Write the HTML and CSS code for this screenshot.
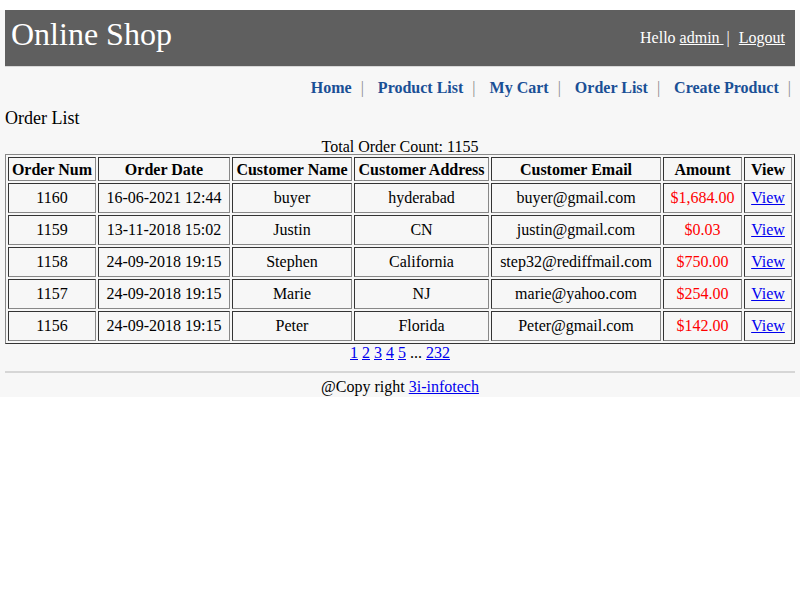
FILE: index.html
```html
<!DOCTYPE html>
<html>
<head>
<meta charset="utf-8">
<title>Online Shop</title>
<link rel="stylesheet" href="styles.css">
</head>
<body>
<div class="page">
  <div class="header">
    <div class="brand">Online Shop</div>
    <div class="user">Hello <a href="#">admin </a> <span class="bar">|</span> <a href="#">Logout</a></div>
  </div>
  <div class="nav">
    <a href="#">Home</a><span class="sep">|</span>
    <a href="#">Product List</a><span class="sep">|</span>
    <a href="#">My Cart</a><span class="sep">|</span>
    <a href="#">Order List</a><span class="sep">|</span>
    <a href="#">Create Product</a><span class="sep">|</span>
  </div>
  <div class="title">Order List</div>
  <div class="count">Total Order Count: 1155</div>
  <table class="orders" border="1">
    <tr><th class="c1">Order Num</th><th class="c2">Order Date</th><th class="c3">Customer Name</th><th class="c4">Customer Address</th><th class="c5">Customer Email</th><th class="c6">Amount</th><th class="c7">View</th></tr>
    <tr><td>1160</td><td>16-06-2021 12:44</td><td>buyer</td><td>hyderabad</td><td>buyer@gmail.com</td><td class="amt">$1,684.00</td><td><a href="#">View</a></td></tr>
    <tr><td>1159</td><td>13-11-2018 15:02</td><td>Justin</td><td>CN</td><td>justin@gmail.com</td><td class="amt">$0.03</td><td><a href="#">View</a></td></tr>
    <tr><td>1158</td><td>24-09-2018 19:15</td><td>Stephen</td><td>California</td><td>step32@rediffmail.com</td><td class="amt">$750.00</td><td><a href="#">View</a></td></tr>
    <tr><td>1157</td><td>24-09-2018 19:15</td><td>Marie</td><td>NJ</td><td>marie@yahoo.com</td><td class="amt">$254.00</td><td><a href="#">View</a></td></tr>
    <tr><td>1156</td><td>24-09-2018 19:15</td><td>Peter</td><td>Florida</td><td>Peter@gmail.com</td><td class="amt">$142.00</td><td><a href="#">View</a></td></tr>
  </table>
  <div class="pager"><a href="#">1</a> <a href="#">2</a> <a href="#">3</a> <a href="#">4</a> <a href="#">5</a> ... <a href="#">232</a></div>
  <hr class="rule">
  <div class="footer">@Copy right <a href="#">3i-infotech</a></div>
</div>
</body>
</html>
```

FILE: styles.css
```css
html, body {
  margin: 0;
  padding: 0;
  background: #fff;
  font-family: "Liberation Serif", "Times New Roman", serif;
  font-size: 16px;
  color: #000;
}
.page {
  margin-top: 10px;
  background: #f7f7f7;
  padding: 0 5px;
  width: 790px;
}
.header {
  background: #5f5f5f;
  height: 56px;
  border-bottom: 1px solid #d8d8d8;
  display: flex;
  justify-content: space-between;
  align-items: center;
  color: #fff;
}
.brand {
  font-size: 32px;
  padding-left: 6px;
  margin-top: -8px;
}
.user {
  padding-right: 10px;
  font-size: 16px;
}
.user a {
  color: #fff;
}
.user .bar {
  margin: 0 5px 0 3px;
}
.nav {
  text-align: right;
  padding-top: 12px;
  padding-right: 2px;
  height: 20px;
  font-weight: bold;
  font-size: 16px;
}
.nav a {
  color: #1a5096;
  text-decoration: none;
  margin-left: 8px;
}
.nav .sep {
  font-weight: normal;
  color: #8a8a8a;
  margin-left: 9px;
  margin-right: 2px;
}
.title {
  font-size: 18px;
  margin-top: 9px;
  height: 20px;
}
.count {
  text-align: center;
  margin-top: 11px;
  height: 15px;
  line-height: 15px;
}
.orders {
  width: 100%;
  table-layout: fixed;
  border-spacing: 2px;
  border: 1px outset #888;
  background: #f7f7f7;
}
.orders th, .orders td {
  box-sizing: border-box;
  border: 1px inset #888;
  text-align: center;
  white-space: nowrap;
}
.orders th {
  padding: 3px 1px 1px;
}
.orders td {
  padding: 5px 2px;
}
.orders .c1 { width: 88px; }
.orders .c2 { width: 132px; }
.orders .c3 { width: 120px; }
.orders .c4 { width: 135px; }
.orders .c5 { width: 170px; }
.orders .c6 { width: 79px; }
.orders .c7 { width: 48px; }
.orders td.amt {
  color: #ff0000;
}
.orders a, .pager a, .footer a {
  color: #0000ee;
}
.pager {
  text-align: center;
  height: 18px;
}
.rule {
  margin: 9px 0 0;
  border: 0;
  border-top: 2px solid #d6d6d6;
}
.footer {
  text-align: center;
  padding: 5px 0 0;
  height: 19px;
}
```
